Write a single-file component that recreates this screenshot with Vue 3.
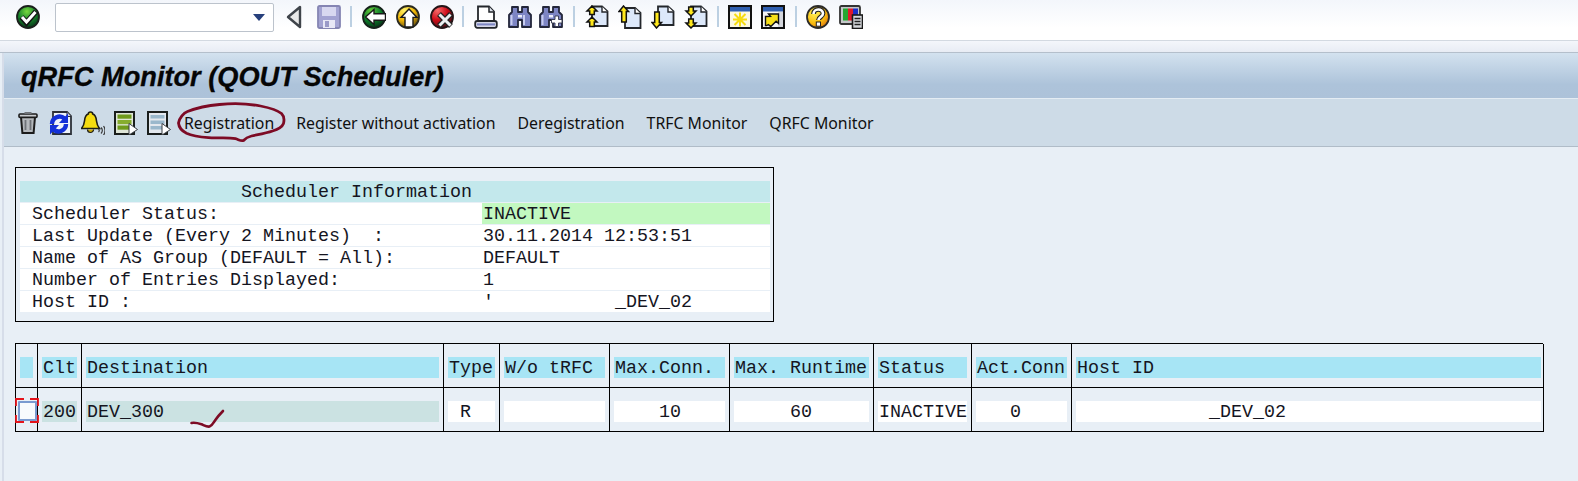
<script setup>
const columns = [
  { key: 'sel', width: 22, head: '', value: '' },
  { key: 'clt', width: 44, head: 'Clt', value: '200', tone: 'soft' },
  { key: 'dest', width: 362, head: 'Destination', value: 'DEV_300', tone: 'soft' },
  { key: 'type', width: 56, head: 'Type', value: ' R' },
  { key: 'wo', width: 110, head: 'W/o tRFC', value: '' },
  { key: 'conn', width: 120, head: 'Max.Conn.', value: '    10' },
  { key: 'run', width: 144, head: 'Max. Runtime', value: '     60' },
  { key: 'status', width: 98, head: 'Status', value: 'INACTIVE' },
  { key: 'act', width: 100, head: 'Act.Conn', value: '   0' },
  { key: 'host', width: 472, head: 'Host ID', value: '            _DEV_02' }
]
const gridColumns = columns.map((c) => c.width + 'px').join(' ')
const infoRows = [
  { label: 'Scheduler Status:', value: 'INACTIVE', ok: true },
  { label: 'Last Update (Every 2 Minutes)  :', value: '30.11.2014 12:53:51' },
  { label: 'Name of AS Group (DEFAULT = All):', value: 'DEFAULT' },
  { label: 'Number of Entries Displayed:', value: '1' },
  { label: 'Host ID :', value: "'           _DEV_02" }
]
const actions = ['Registration', 'Register without activation', 'Deregistration', 'TRFC Monitor', 'QRFC Monitor']
</script>

<template>
  <div class="page">
    <header class="topbar">
      <svg class="ic check" viewBox="0 0 24 24">
        <defs><radialGradient id="gG" cx=".45" cy=".25" r=".8"><stop offset="0" stop-color="#79d83f"/><stop offset=".5" stop-color="#17852b"/><stop offset="1" stop-color="#062a16"/></radialGradient></defs>
        <circle cx="12" cy="12" r="11" fill="url(#gG)" stroke="#1b1f1c" stroke-width="1.800"/>
        <path d="M5.500 12l5 5.500L20 6.500" fill="none" stroke="#141414" stroke-width="5.500"/>
        <path d="M6 12l4.500 5L19.500 7" fill="none" stroke="#fff" stroke-width="3"/>
      </svg>
      <div class="combo"><span class="combo-arrow"></span></div>
      <svg class="ic back" viewBox="0 0 16 24">
        <path d="M14 2v20L2 12z" fill="#e9e9e9" stroke="#3f444a" stroke-width="2.400" stroke-linejoin="round"/>
      </svg>
      <svg class="ic save" viewBox="0 0 24 24">
        <rect x="1" y="1" width="22" height="22" rx="1.500" fill="#a3a3d2" stroke="#8585b3" stroke-width="1.800"/>
        <rect x="5" y="2" width="14" height="9" fill="#d8d8f0"/>
        <rect x="6" y="15" width="12" height="8" fill="#e8e8f6"/>
        <rect x="8" y="16" width="4" height="6" fill="#9a9ac8"/>
      </svg>
      <i class="sep"></i>
      <svg class="ic m10" viewBox="0 0 24 24">
        <defs><radialGradient id="gB" cx=".35" cy=".2" r=".85"><stop offset="0" stop-color="#62c83a"/><stop offset=".55" stop-color="#0d7d2a"/><stop offset="1" stop-color="#062c16"/></radialGradient></defs>
        <circle cx="12" cy="12" r="11" fill="url(#gB)" stroke="#15201a" stroke-width="1.800"/>
        <path d="M3.500 12L12 4.500v4.300H23.500v6.400H12v4.300z" fill="#fff" stroke="#1a1a1a" stroke-width="1.400"/>
      </svg>
      <svg class="ic m10" viewBox="0 0 24 24">
        <defs><radialGradient id="gY" cx=".35" cy=".2" r=".9"><stop offset="0" stop-color="#fff36a"/><stop offset=".5" stop-color="#f2b705"/><stop offset="1" stop-color="#4a3a12"/></radialGradient></defs>
        <circle cx="12" cy="12" r="11" fill="url(#gY)" stroke="#2a2a20" stroke-width="1.800"/>
        <path d="M13 4l8 8.400h-4V22H9v-9.600H5z" fill="#fff" stroke="#1a1a1a" stroke-width="1.400"/>
      </svg>
      <svg class="ic m8" viewBox="0 0 24 24">
        <defs><radialGradient id="gR" cx=".3" cy=".2" r=".9"><stop offset="0" stop-color="#f86a6a"/><stop offset=".5" stop-color="#cc0c18"/><stop offset="1" stop-color="#3a1218"/></radialGradient></defs>
        <circle cx="12" cy="12" r="11" fill="url(#gR)" stroke="#241416" stroke-width="1.800"/>
        <path d="M9 9l12 12M21 9L9 21" stroke="#222" stroke-width="5.500"/>
        <path d="M9.500 9.500l11 11M20.500 9.500l-11 11" stroke="#eef0f2" stroke-width="3"/>
      </svg>
      <i class="sep"></i>
      <svg class="ic m10" viewBox="0 0 24 24">
        <path d="M4 1.500h11l5 5V17H4z" fill="#fff" stroke="#23262b" stroke-width="1.800"/>
        <path d="M15 1.500V7h5" fill="#dfe4ee" stroke="#23262b" stroke-width="1.500"/>
        <rect x="1.200" y="16" width="21.600" height="6.800" rx="2" fill="#d6d8ea" stroke="#23262b" stroke-width="1.800"/>
        <rect x="3" y="18.400" width="18" height="2" fill="#7d86c4"/>
      </svg>
      <svg class="ic m7" viewBox="0 0 24 24">
        <path d="M4 2h6v5h4V2h6v5l3 3v12h-9v-7h-4v7H1V10l3-3z" fill="#7d85c4" stroke="#23263a" stroke-width="1.800" stroke-linejoin="round"/>
        <path d="M3.500 10v10M16 10v10" stroke="#c8cdf0" stroke-width="2"/>
        <path d="M10 10h4v2.500h-4z" fill="#eceefa"/>
      </svg>
      <svg class="ic m10" viewBox="0 0 24 24">
        <path d="M4 2h6v5h4V2h6v5l3 3v12h-9v-7h-4v7H1V10l3-3z" fill="#7d85c4" stroke="#23263a" stroke-width="1.800" stroke-linejoin="round"/>
        <path d="M3.500 10v10" stroke="#c8cdf0" stroke-width="2"/>
        <path d="M10 10h4v2.500h-4z" fill="#eceefa"/>
        <path d="M16 11h3.500v3.500H23v3.500h-3.500v3.500H16V18h-3.500v-3.500H16z" fill="#fff" stroke="#30334a" stroke-width=".9"/>
      </svg>
      <i class="sep"></i>
      <svg class="ic" viewBox="0 0 24 24">
        <path d="M7 1.500h10l5.500 5V21H7z" fill="#dce8fa" stroke="#23262b" stroke-width="1.800"/>
        <path d="M17 1.500V7h5.500" fill="#fff" stroke="#23262b" stroke-width="1.400"/>
        <path d="M7 1l5 5H9.300v3.500H4.700V6H2z" fill="#ffe81c" stroke="#111" stroke-width="1.500"/>
        <path d="M7 12l5 5H9.300v4.500H4.700V17H2z" fill="#ffe81c" stroke="#111" stroke-width="1.500"/>
      </svg>
      <svg class="ic" viewBox="0 0 24 24">
        <path d="M7 3h10l5.500 5v15H7z" fill="#dce8fa" stroke="#23262b" stroke-width="1.800"/>
        <path d="M17 3v5.500h5.500" fill="#fff" stroke="#23262b" stroke-width="1.400"/>
        <path d="M5.500 1l5 5.500H8.300V17H3.700V6.500H1z" fill="#ffe81c" stroke="#111" stroke-width="1.500"/>
      </svg>
      <svg class="ic" viewBox="0 0 24 24">
        <path d="M7 1.500h10l5.500 5V20H7z" fill="#dce8fa" stroke="#23262b" stroke-width="1.800"/>
        <path d="M17 1.500V7h5.500" fill="#fff" stroke="#23262b" stroke-width="1.400"/>
        <path d="M5.500 23l5-5.500H8.300V7H3.700v10.500H1z" fill="#ffe81c" stroke="#111" stroke-width="1.500"/>
      </svg>
      <svg class="ic" viewBox="0 0 24 24">
        <path d="M7 1.500h10l5.500 5V21H7z" fill="#dce8fa" stroke="#23262b" stroke-width="1.800"/>
        <path d="M7 11l5-5H9.300V2H4.700v4H2z" fill="#ffe81c" stroke="#111" stroke-width="1.500"/>
        <path d="M17 1.500V7h5.500" fill="#fff" stroke="#23262b" stroke-width="1.400"/>
        <path d="M7 23l5-5H9.300v-4H4.700v4H2z" fill="#ffe81c" stroke="#111" stroke-width="1.500"/>
      </svg>
      <i class="sep tight"></i>
      <svg class="ic" viewBox="0 0 24 24">
        <rect x="1" y="1" width="22" height="22" fill="#fdf9e0" stroke="#111" stroke-width="2"/>
        <rect x="2" y="2" width="20" height="4.500" fill="#2f5fb0"/>
        <path d="M12 7.500v14M5 14.500h14M6.500 9l11 11M17.500 9l-11 11" stroke="#f6dc10" stroke-width="2"/>
      </svg>
      <svg class="ic m10" viewBox="0 0 24 24">
        <rect x="1" y="1" width="22" height="22" fill="#f4f4f4" stroke="#111" stroke-width="2"/>
        <rect x="2" y="2" width="20" height="4.500" fill="#2f5fb0"/>
        <rect x="17" y="7" width="5" height="15" fill="#d5d7dd"/>
        <path d="M4.500 20.500v-9l5-.1-2-2.400h10v9.500l-2.400-2.200-5.300 5.300-2.400-2-1.900 1z" fill="#f8e01a" stroke="#111" stroke-width="1.400"/>
      </svg>
      <i class="sep tight"></i>
      <svg class="ic" viewBox="0 0 24 24">
        <defs><radialGradient id="gH" cx=".35" cy=".3" r=".8"><stop offset="0" stop-color="#fff25c"/><stop offset=".6" stop-color="#f9bd0f"/><stop offset="1" stop-color="#dd6f10"/></radialGradient></defs>
        <circle cx="12" cy="12" r="11" fill="url(#gH)" stroke="#2b2a28" stroke-width="1.800"/>
        <path d="M7.500 9c0-6 9.500-6 9.500-.5 0 3.500-4.500 3.500-4.500 6.500" fill="none" stroke="#222" stroke-width="4.800"/>
        <path d="M7.500 9c0-6 9.500-6 9.500-.5 0 3.500-4.500 3.500-4.500 6.500" fill="none" stroke="#fff" stroke-width="2.600"/>
        <rect x="10.300" y="17" width="4.200" height="4.200" fill="#fff" stroke="#222"/>
      </svg>
      <svg class="ic" viewBox="0 0 24 24">
        <rect x="1" y="1" width="20" height="18" rx="1.500" fill="#c4c6c8" stroke="#333" stroke-width="1.800"/>
        <rect x="4" y="3.500" width="5" height="12" fill="#24a830"/>
        <rect x="9" y="3.500" width="5" height="12" fill="#e01a2a"/>
        <rect x="14" y="3.500" width="5" height="12" fill="#1c2ec8"/>
        <rect x="13.500" y="10" width="10" height="13.500" fill="#d6d8dc" stroke="#1a1a1a" stroke-width="1.600"/>
        <path d="M15.500 13.500h6M15.500 16.500h6M15.500 19.500h6" stroke="#222" stroke-width="1.400"/>
      </svg>
    </header>

    <div class="strip"></div>

    <main class="main">
      <h1 class="title">qRFC Monitor (QOUT Scheduler)</h1>
      <nav class="apptools">
        <svg class="ic trash" viewBox="0 0 20 24">
          <path d="M3 6h14l-1.400 16H4.400z" fill="#b4b8bc" stroke="#1c1c1c" stroke-width="2"/>
          <path d="M7.500 9v10M12.500 9v10" stroke="#6f7378" stroke-width="1.800"/>
          <rect x="1" y="3" width="18" height="3.400" rx="1" fill="#c9ccd0" stroke="#1c1c1c" stroke-width="1.600"/>
          <rect x="6.500" y="1" width="7" height="2" fill="#6f7378"/>
        </svg>
        <svg class="ic" viewBox="0 0 24 24">
          <path d="M5 1h14l4 4v18H5z" fill="#eef3fa" stroke="#2c3038" stroke-width="1.800"/>
          <path d="M19 1v4.500h4" fill="#cfd6e2" stroke="#2c3038"/>
          <path d="M4 13a7.500 7.500 0 0 1 12.500-5.500" fill="none" stroke="#1230d8" stroke-width="4.400"/>
          <path d="M20 2.500V12h-9z" fill="#1230d8"/>
          <path d="M18 13a7.500 7.500 0 0 1-12.500 5.500" fill="none" stroke="#1230d8" stroke-width="4.400"/>
          <path d="M2 23.500V14h9z" fill="#1230d8"/>
        </svg>
        <svg class="ic" viewBox="0 0 24 24">
          <path d="M9.500 1c1.500 0 2.200.8 2.200 2 3 .8 3.500 3.500 3.800 7 .3 3 1 5 3 7.500H.5c2-2.500 2.700-4.500 3-7.500.3-3.500.8-6.200 3.800-7C7.300 1.800 8 1 9.500 1z" fill="#f5dc10" stroke="#1d1d16" stroke-width="1.600"/>
          <path d="M6.500 18.500a3 3 0 0 0 6 0" fill="#c9a90a" stroke="#1d1d16" stroke-width="1.200"/>
          <path d="M17.500 18c1 .8 1 2.200 0 3M20 16.500c1.800 1.700 1.800 4.300 0 6M22.500 15c2 2.500 2 6.500 0 9" fill="none" stroke="#3a3a3a" stroke-width="1.200"/>
        </svg>
        <svg class="ic" viewBox="0 0 24 24">
          <rect x="1" y="1" width="19" height="22" fill="#dfe6d8" stroke="#1a1e1c" stroke-width="2"/>
          <rect x="3.500" y="3.500" width="14" height="4.200" fill="#6f9a1c"/>
          <rect x="3.500" y="9" width="14" height="4.200" fill="#86ad2e"/>
          <rect x="3.500" y="14.500" width="14" height="4.200" fill="#6f9a1c"/>
          <path d="M15 12.500l8.500 6L15 24z" fill="#fff" stroke="#3a3f44"/>
        </svg>
        <svg class="ic" viewBox="0 0 24 24">
          <rect x="1" y="1" width="19" height="22" fill="#e3e8ee" stroke="#1a1e1c" stroke-width="2"/>
          <rect x="3.500" y="4" width="14" height="3.500" fill="#9ab8cc"/>
          <rect x="3.500" y="9.500" width="14" height="3.500" fill="#9ab8cc"/>
          <rect x="3.500" y="15" width="14" height="3.500" fill="#9ab8cc"/>
          <path d="M15 12.500l8.500 6L15 24z" fill="#fff" stroke="#3a3f44"/>
        </svg>
        <div class="actions">
          <span v-for="a in actions" :key="a" class="action">{{ a }}</span>
        </div>
      </nav>

      <section class="info">
        <div class="info-title">Scheduler Information</div>
        <div v-for="r in infoRows" :key="r.label" class="info-row">
          <span class="info-label">{{ r.label }}</span>
          <span class="info-value" :class="{ ok: r.ok }">{{ r.value }}</span>
        </div>
      </section>

      <section class="table" :style="{ gridTemplateColumns: gridColumns }">
        <div v-for="c in columns" :key="c.key" class="cell head">
          <span class="fill">{{ c.head }}</span>
        </div>
        <div v-for="c in columns" :key="c.key + '-v'" class="cell body">
          <span v-if="c.key === 'sel'" class="checkbox"></span>
          <span v-else class="fill" :class="c.tone">{{ c.value }}</span>
        </div>
        <svg class="focus" viewBox="0 0 24 25">
          <path d="M1 8V1h8M15 1h8v7M23 17v7h-8M9 24H1v-7" fill="none" stroke="#e5141b" stroke-width="1.800"/>
        </svg>
      </section>

      <svg class="ink" viewBox="0 0 1578 481">
        <path transform="translate(0 1)" d="M178.500 122c1-5 5-10 9-11.500 9-3.500 21-6 32-7 15-1.500 29-.8 41 1.500 7 1.400 16 3.500 21 7.500 2.500 2.500 3 6 2 10-1.500 4-6 6-11 7.500-6 2.200-14 3.500-21 5-3 .7-6 2.200-8 4.500-2.500 1-5-1-8-1.800-9-1.700-18-.2-27-1-8-.7-16-1.800-22-4.500-4-2-7.500-5-8-10.200z" fill="none" stroke="#7d0b25" stroke-width="2.800"/>
        <path transform="translate(1 0)" d="M190.500 423c3.500-.6 7 .3 10 1.300 2.600 1 5.500 2.800 8 2.200 3-1 4-4 5.500-6 2.500-3.700 5.500-7 8-9.500" fill="none" stroke="#7d0b25" stroke-width="2.600" stroke-linecap="round"/>
      </svg>
    </main>
  </div>
</template>

<style scoped>
.page {
  width: 1578px;
  height: 481px;
  overflow: hidden;
  position: relative;
  background: #e8eff6;
  color: #111;
}
.topbar {
  box-sizing: border-box;
  height: 41px;
  padding: 5px 0 0 16px;
  display: flex;
  align-items: flex-start;
  background: linear-gradient(#f3f6fb, #fff 70%);
  border-bottom: 1px solid #d3d9e1;
}
.ic {
  width: 24px;
  height: 24px;
  flex: none;
  margin-right: 9px;
  display: block;
}
.m10 { margin-right: 10px; }
.m8 { margin-right: 8px; }
.m7 { margin-right: 7px; }
.check { margin-right: 15px; }
.combo {
  width: 219px;
  height: 29px;
  margin: -2px 12px 0 0;
  box-sizing: border-box;
  background: #fff;
  border: 1px solid #bcc3cc;
  border-radius: 2px;
  position: relative;
  flex: none;
}
.combo-arrow {
  position: absolute;
  left: 197px;
  top: 10px;
  border-style: solid;
  border-width: 7px 6.500px 0;
  border-color: #27407c transparent transparent;
}
.back { width: 16px; margin-right: 15px; }
.save { margin-right: 9px; }
.sep {
  width: 2px;
  height: 21px;
  margin: 1px 10px 0 0;
  background: #bcd0e2;
  flex: none;
}
.sep.tight { margin-right: 9px; }
.strip {
  height: 11px;
  background: linear-gradient(#f4f6fb, #e8ecf4);
  border-bottom: 1px solid #b4bfcb;
}
.main {
  position: relative;
  margin-left: 2px;
  border-left: 2px solid #d6dde9;
  height: 428px;
}
.title {
  margin: 0;
  height: 46px;
  box-sizing: border-box;
  padding: 0 0 0 17px;
  font: italic bold 27.200px/47px "Liberation Sans", Arial, sans-serif;
  -webkit-text-stroke: 0.3px #050505;
  color: #050505;
  background: linear-gradient(#d3e2ef, #adc3da 70%, #adc2d9);
  border-bottom: 1px solid #e4ecf3;
  white-space: nowrap;
}
.apptools {
  height: 48px;
  box-sizing: border-box;
  background: #cddbe7;
  border-bottom: 1px solid #b0bcc8;
  display: flex;
  align-items: center;
  padding: 0 0 0 14px;
}
.apptools .ic { margin-right: 9px; }
.apptools .trash { width: 20px; margin-right: 10px; }
.actions {
  display: flex;
  gap: 22px;
  margin-left: 4px;
  padding-top: 1px;
  font: 15.850px/20px "Noto Sans", Tahoma, sans-serif;
  color: #101010;
}
.action { white-space: nowrap; }
.info,
.table {
  font: 18.330px/23px "Liberation Mono", "Courier New", monospace;
  color: #15151f;
}
.info {
  margin: 20px 0 0 11px;
  width: 759px;
  height: 155px;
  box-sizing: border-box;
  border: 1px solid #000;
  padding: 13px 3px 0 4px;
}
.info-title {
  height: 21px;
  margin-bottom: 1px;
  background: #c3e8ec;
  padding-left: 221px;
  white-space: pre;
}
.info-row {
  height: 21px;
  margin-bottom: 1px;
  background: #fff;
  display: flex;
  white-space: pre;
}
.info-label {
  width: 462px;
  padding-left: 12px;
  box-sizing: border-box;
  flex: none;
}
.info-value {
  flex: 1;
  padding-left: 1px;
}
.info-value.ok { background: #c2f8c0; }
.table {
  position: relative;
  display: grid;
  margin: 21px 0 0 11px;
  width: 1528px;
  box-sizing: border-box;
  border-top: 1px solid #000;
  border-left: 1px solid #000;
}
.cell {
  box-sizing: border-box;
  height: 44px;
  border-right: 1px solid #000;
  border-bottom: 1px solid #000;
  padding: 13px 4px 9px;
  white-space: pre;
}
.cell:nth-child(10n + 10) { padding-right: 2px; }
.fill {
  display: block;
  height: 21px;
  padding-left: 1px;
  background: #fff;
}
.head .fill { background: #a7e5f5; }
.fill.soft { background: #cbe2e2; }
.checkbox {
  display: block;
  width: 19px;
  height: 20px;
  margin-left: -2px;
  box-sizing: border-box;
  background: #f8fafd;
  border: 2px solid #7a9ad0;
  border-radius: 1px;
}
.focus {
  position: absolute;
  left: -1px;
  top: 54px;
  width: 24px;
  height: 25px;
}
.ink {
  position: absolute;
  left: -4px;
  top: -53px;
  width: 1578px;
  height: 481px;
  pointer-events: none;
}
</style>

<style>
html, body { margin: 0; overflow: hidden; }
</style>
